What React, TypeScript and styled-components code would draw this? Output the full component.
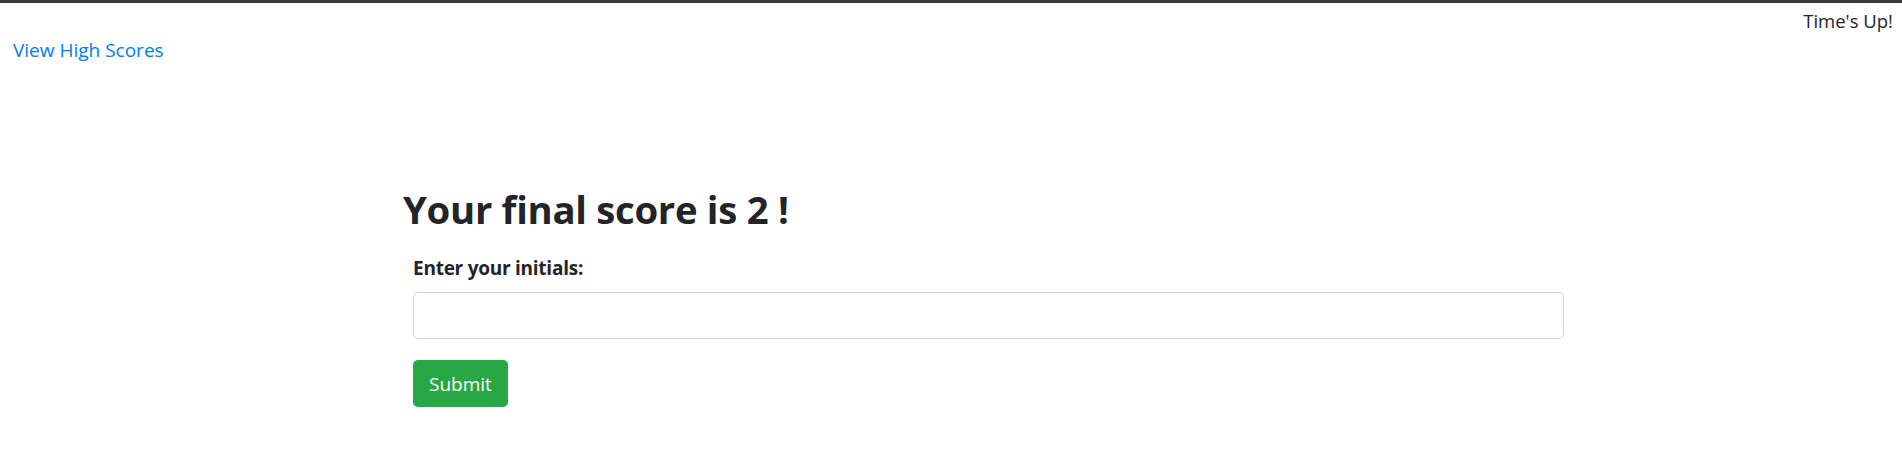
import React from "react";
import styled, { createGlobalStyle } from "styled-components";

const Global = createGlobalStyle`
  html, body { margin: 0; padding: 0; background: #fff; }
  body { font-family: "Open Sans", "Noto Sans", sans-serif; color: #212529; }
  * { box-sizing: border-box; }
`;

const TopBar = styled.div`
  height: 3px;
  background: #3a3a3a;
`;

const Header = styled.header`
  display: flex;
  flex-direction: column;
  padding: 4px 9px 0 13px;
`;

const Timer = styled.div`
  align-self: flex-end;
  font-size: 18.5px;
  line-height: 28px;
  color: #212529;
`;

const HighScores = styled.a`
  font-size: 19px;
  line-height: 30px;
  color: #007bff;
  text-decoration: none;
  cursor: pointer;
`;

const Main = styled.main`
  padding: 120px 0 0 403px;
`;

const Title = styled.h2`
  margin: 0;
  font-size: 38.3px;
  line-height: 48px;
  font-weight: 700;
  letter-spacing: -0.3px;
`;

const Form = styled.form`
  display: flex;
  flex-direction: column;
  align-items: flex-start;
  padding: 20px 0 0 10px;
  width: 1161px;
`;

const Label = styled.label`
  font-size: 19px;
  line-height: 30px;
  font-weight: 700;
  letter-spacing: -0.25px;
  margin-bottom: 9px;
`;

const Input = styled.input`
  width: 100%;
  height: 47px;
  border: 1px solid #ced4da;
  border-radius: 5px;
  font: inherit;
  font-size: 20px;
  padding: 0 15px;
  margin-bottom: 21px;
  outline: none;
`;

const Button = styled.button`
  height: 47px;
  padding: 0 16px;
  border: none;
  border-radius: 5px;
  background: #28a745;
  color: #fff;
  font-family: inherit;
  font-size: 19px;
  cursor: pointer;
`;

export default function App() {
  return (
    <>
      <Global />
      <TopBar />
      <Header>
        <Timer>Time's Up!</Timer>
        <HighScores href="#">View High Scores</HighScores>
      </Header>
      <Main>
        <Title>Your final score is 2 !</Title>
        <Form onSubmit={(e) => e.preventDefault()}>
          <Label htmlFor="initials">Enter your initials:</Label>
          <Input id="initials" type="text" />
          <Button type="submit">Submit</Button>
        </Form>
      </Main>
    </>
  );
}
